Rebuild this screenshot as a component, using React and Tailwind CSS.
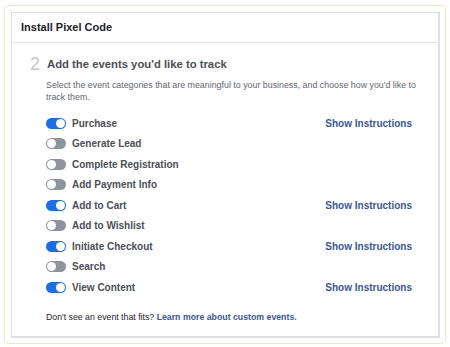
const events = [
  { name: "Purchase", on: true },
  { name: "Generate Lead", on: false },
  { name: "Complete Registration", on: false },
  { name: "Add Payment Info", on: false },
  { name: "Add to Cart", on: true },
  { name: "Add to Wishlist", on: false },
  { name: "Initiate Checkout", on: true },
  { name: "Search", on: false },
  { name: "View Content", on: true },
];

const Toggle = ({ on }) => (
  <div
    className={`relative w-[20px] h-[11px] rounded-full shrink-0 ${on ? "bg-[#1a6ee8]" : "bg-[#8d949e]"}`}
  >
    <div
      className={`absolute top-[1px] w-[9px] h-[9px] rounded-full bg-white ${on ? "right-[1px]" : "left-[1px]"}`}
    />
  </div>
);

export default function App() {
  return (
    <div className="w-[450px] h-[347px] bg-white pt-[5px] pl-[4px] pr-[4px] pb-[3px] font-['Liberation_Sans',Arial,sans-serif]">
      <div className="h-full rounded-[5px] border border-[#f3e5c0] pt-[6px] pl-[6px] pr-[5px] pb-[5px]">
        <div className="h-full border border-[#dddfe2] border-r-2 border-b-2 bg-white flex flex-col">
          <div className="h-[30px] border-b border-[#e5e6e9] flex items-center pl-[9px] text-[11px] font-bold text-[#1d2129]">
            Install Pixel Code
          </div>
          <div className="flex-1 pl-[18px] pr-[26px] pt-[11px]">
            <div className="flex items-center gap-[7px]">
              <span className="w-[10px] text-[18px] leading-[20px] text-[#c4c8cd]">2</span>
              <span className="text-[11.3px] font-bold text-[#4b4f56]">Add the events you'd like to track</span>
            </div>
            <p className="ml-[16px] mr-[-8px] mt-[5px] text-[8.85px] leading-[12px] text-[#606770]">
              Select the event categories that are meaningful to your business, and choose how you'd like to track them.
            </p>
            <div className="ml-[16px] mt-[10px] flex flex-col">
              {events.map((e) => (
                <div key={e.name} className="h-[20.5px] flex items-center">
                  <Toggle on={e.on} />
                  <span className="ml-[6px] flex-1 text-[10px] font-bold text-[#4b4f56]">{e.name}</span>
                  {e.on && (
                    <span className="text-[10px] font-bold text-[#385898]">Show Instructions</span>
                  )}
                </div>
              ))}
            </div>
            <p className="ml-[16px] mt-[13px] text-[8.75px] text-[#1d2129]">
              Don't see an event that fits?{" "}
              <span className="font-bold text-[#385898]">Learn more about custom events.</span>
            </p>
          </div>
        </div>
      </div>
    </div>
  );
}
